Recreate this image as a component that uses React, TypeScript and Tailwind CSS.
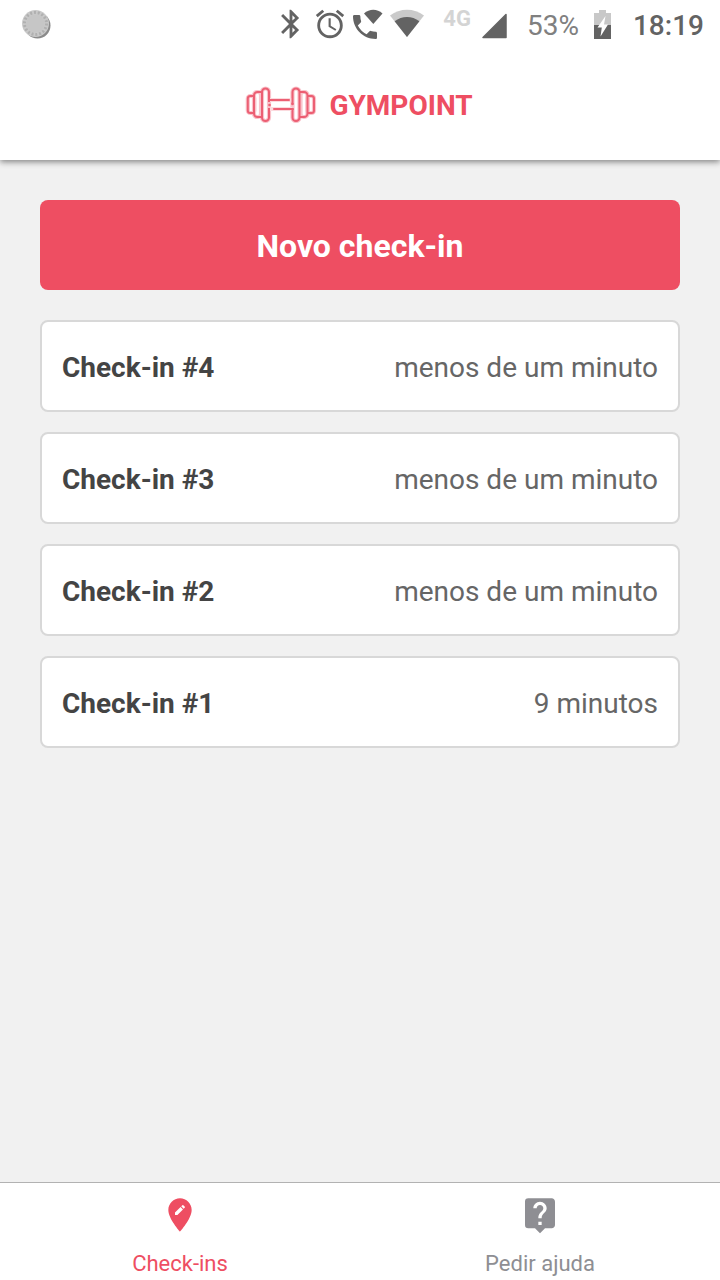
import type { ReactNode } from 'react';
import { MdAccessAlarm, MdBluetooth, MdEditLocation, MdLiveHelp } from 'react-icons/md';

const checkins = [
  { id: 4, time: 'menos de um minuto' },
  { id: 3, time: 'menos de um minuto' },
  { id: 2, time: 'menos de um minuto' },
  { id: 1, time: '9 minutos' },
];

function AppBadge() {
  return (
    <svg className="size-8" viewBox="0 0 32 32" aria-hidden="true">
      <circle cx="17.5" cy="17.5" r="13" fill="#8a8a8a" />
      <circle cx="15.5" cy="15.5" r="13.5" fill="#c9c9c9" />
      <circle cx="15.5" cy="15.5" r="11" fill="none" stroke="#b0b0b0" strokeWidth="3" strokeDasharray="2 1.84" />
      <circle cx="15.5" cy="15.5" r="9" fill="#c6c6c6" />
    </svg>
  );
}

function WifiCallIcon() {
  return (
    <svg className="h-8 w-8" viewBox="0 0 32 32" aria-hidden="true" fill="#636363">
      <path
        transform="translate(-3 3) scale(1.333)"
        d="M20 15.5c-1.25 0-2.45-.2-3.57-.57a1.02 1.02 0 0 0-1.02.24l-2.2 2.2a15.05 15.05 0 0 1-6.59-6.58l2.2-2.21a.96.96 0 0 0 .25-1A11.36 11.36 0 0 1 8.500 4c0-.55-.45-1-1-1H4c-.55 0-1 .45-1 1 0 9.390 7.610 17 17 17 .55 0 1-.45 1-1v-3.500c0-.55-.45-1-1-1z"
      />
      <path d="M12 5.500C17.500 .500 25 .500 30.500 5.500L21.300 16z" />
    </svg>
  );
}

function WifiIcon() {
  return (
    <svg className="h-8 w-9" viewBox="0 0 36 32" aria-hidden="true">
      <path d="M1 7.500C11 -.300 25 -.300 35 7.500L18 29z" fill="#cacaca" />
      <path d="M5.600 13.300C13 7.500 23 7.500 30.400 13.300L18 29z" fill="#636363" />
    </svg>
  );
}

function SignalIcon() {
  return (
    <svg className="h-8 w-7" viewBox="0 0 28 32" aria-hidden="true">
      <path d="M25 6.500V29.500H2z" fill="#636363" stroke="#636363" strokeWidth="1.500" strokeLinejoin="round" />
    </svg>
  );
}

function BatteryIcon() {
  return (
    <svg className="h-8 w-5" viewBox="0 0 20 32" aria-hidden="true">
      <path d="M6 2h7v3h5v12H1V5h5z" fill="#c8c8c8" />
      <path d="M1 17h17v14H1z" fill="#636363" />
      <path d="M12.500 8L4.500 19.500h4.300L7.500 28.500l7.500-12h-4z" fill="#fff" />
    </svg>
  );
}

function Dumbbell() {
  return (
    <svg className="h-10 w-18" viewBox="0 0 72 40" aria-hidden="true">
      <g fill="none" stroke="#f9c3cb" strokeWidth="4.200">
        <rect x="2.800" y="12" width="6.500" height="17" rx="2.500" />
        <rect x="9" y="8" width="7" height="25" rx="3" />
        <rect x="17" y="4.500" width="7" height="32.500" rx="3.500" />
        <rect x="47.500" y="4.500" width="7" height="32.500" rx="3.500" />
        <rect x="55.500" y="8" width="7" height="25" rx="3" />
        <rect x="62.500" y="12" width="6.500" height="17" rx="2.500" />
      </g>
      <path d="M25 16h22M25 25h22" stroke="#fbdade" strokeWidth="4" />
      <g fill="none" stroke="#ec5f73" strokeWidth="2">
        <path d="M9 12H5.300a2.500 2.500 0 0 0-2.500 2.500v12a2.500 2.500 0 0 0 2.500 2.500H9M62.500 12h4a2.500 2.500 0 0 1 2.500 2.500v12a2.500 2.500 0 0 1-2.500 2.500h-4" />
        <path d="M16.500 8h-4A3.500 3.500 0 0 0 9 11.500v18a3.500 3.500 0 0 0 3.500 3.500h4M55 8h4a3.500 3.500 0 0 1 3.500 3.500v18A3.500 3.500 0 0 1 59 33h-4" />
        <path d="M24 18V8a3.500 3.500 0 0 0-7 0v25.500a3.500 3.500 0 0 0 7 0V24M47.500 20V8a3.500 3.500 0 0 1 7 0v25.500a3.500 3.500 0 0 1-7 0V25" />
        <path d="M24 16h20M29 25h19" strokeLinecap="round" />
      </g>
      <circle cx="24.500" cy="21" r="1.300" fill="#ec5f73" />
      <circle cx="47.500" cy="20" r="1.300" fill="#ec5f73" />
    </svg>
  );
}

function Tab({ label, active = false, children }: { label: string; active?: boolean; children: ReactNode }) {
  return (
    <a
      href="#"
      aria-current={active ? 'page' : undefined}
      className={`flex flex-1 flex-col items-center gap-[17px] pt-3 text-[22px] leading-6 ${active ? 'text-[#ee4e62]' : 'text-[#8e8e93]'}`}
    >
      {children}
      <span>{label}</span>
    </a>
  );
}

export default function App() {
  return (
    <div className="flex min-h-screen flex-col bg-[#f1f1f1] font-['Roboto',sans-serif]">
      <header className="bg-white shadow-[0_2px_6px_rgba(0,0,0,0.45)]">
        <div className="flex h-12 items-center justify-between pr-4 pl-5 text-[28px] leading-8 text-[#636363]">
          <AppBadge />
          <div className="flex items-center">
            <div className="flex items-center gap-[5px]">
              <MdBluetooth className="size-[34px]" />
              <MdAccessAlarm className="size-[34px]" />
              <WifiCallIcon />
              <WifiIcon />
            </div>
            <span className="mr-[10px] ml-[18px] pb-[10px] text-[22px] leading-6 font-bold text-[#d4d4d4]">4G</span>
            <SignalIcon />
            <span className="mr-[14px] ml-[18px] pt-1 text-[#808080]">53%</span>
            <BatteryIcon />
            <span className="ml-5 pt-1 font-medium">18:19</span>
          </div>
        </div>
        <div className="flex h-28 items-center justify-center gap-3 pr-0.5 text-[#ee4e62]">
          <Dumbbell />
          <h1 className="pt-1 text-[28px] leading-8 font-bold">GYMPOINT</h1>
        </div>
      </header>

      <main className="flex-1 p-10">
        <button type="button" className="h-[90px] w-full rounded-lg bg-[#ee4e62] pt-0.5 text-[32px] leading-10 font-bold text-white">
          Novo check-in
        </button>
        <ul className="mt-[30px] flex flex-col gap-5">
          {checkins.map(({ id, time }) => (
            <li
              key={id}
              className="flex h-[92px] items-center justify-between rounded-lg border-2 border-[#d8d8d8] bg-white px-5 pt-1 text-[28px] leading-8"
            >
              <strong className="font-bold text-[#444]">Check-in #{id}</strong>
              <span className="text-[#666]">{time}</span>
            </li>
          ))}
        </ul>
      </main>

      <nav className="flex h-[98px] border-t border-[#b2b2b2] bg-white">
        <Tab label="Check-ins" active>
          <MdEditLocation className="size-10" />
        </Tab>
        <Tab label="Pedir ajuda">
          <MdLiveHelp className="size-10" />
        </Tab>
      </nav>
    </div>
  );
}
